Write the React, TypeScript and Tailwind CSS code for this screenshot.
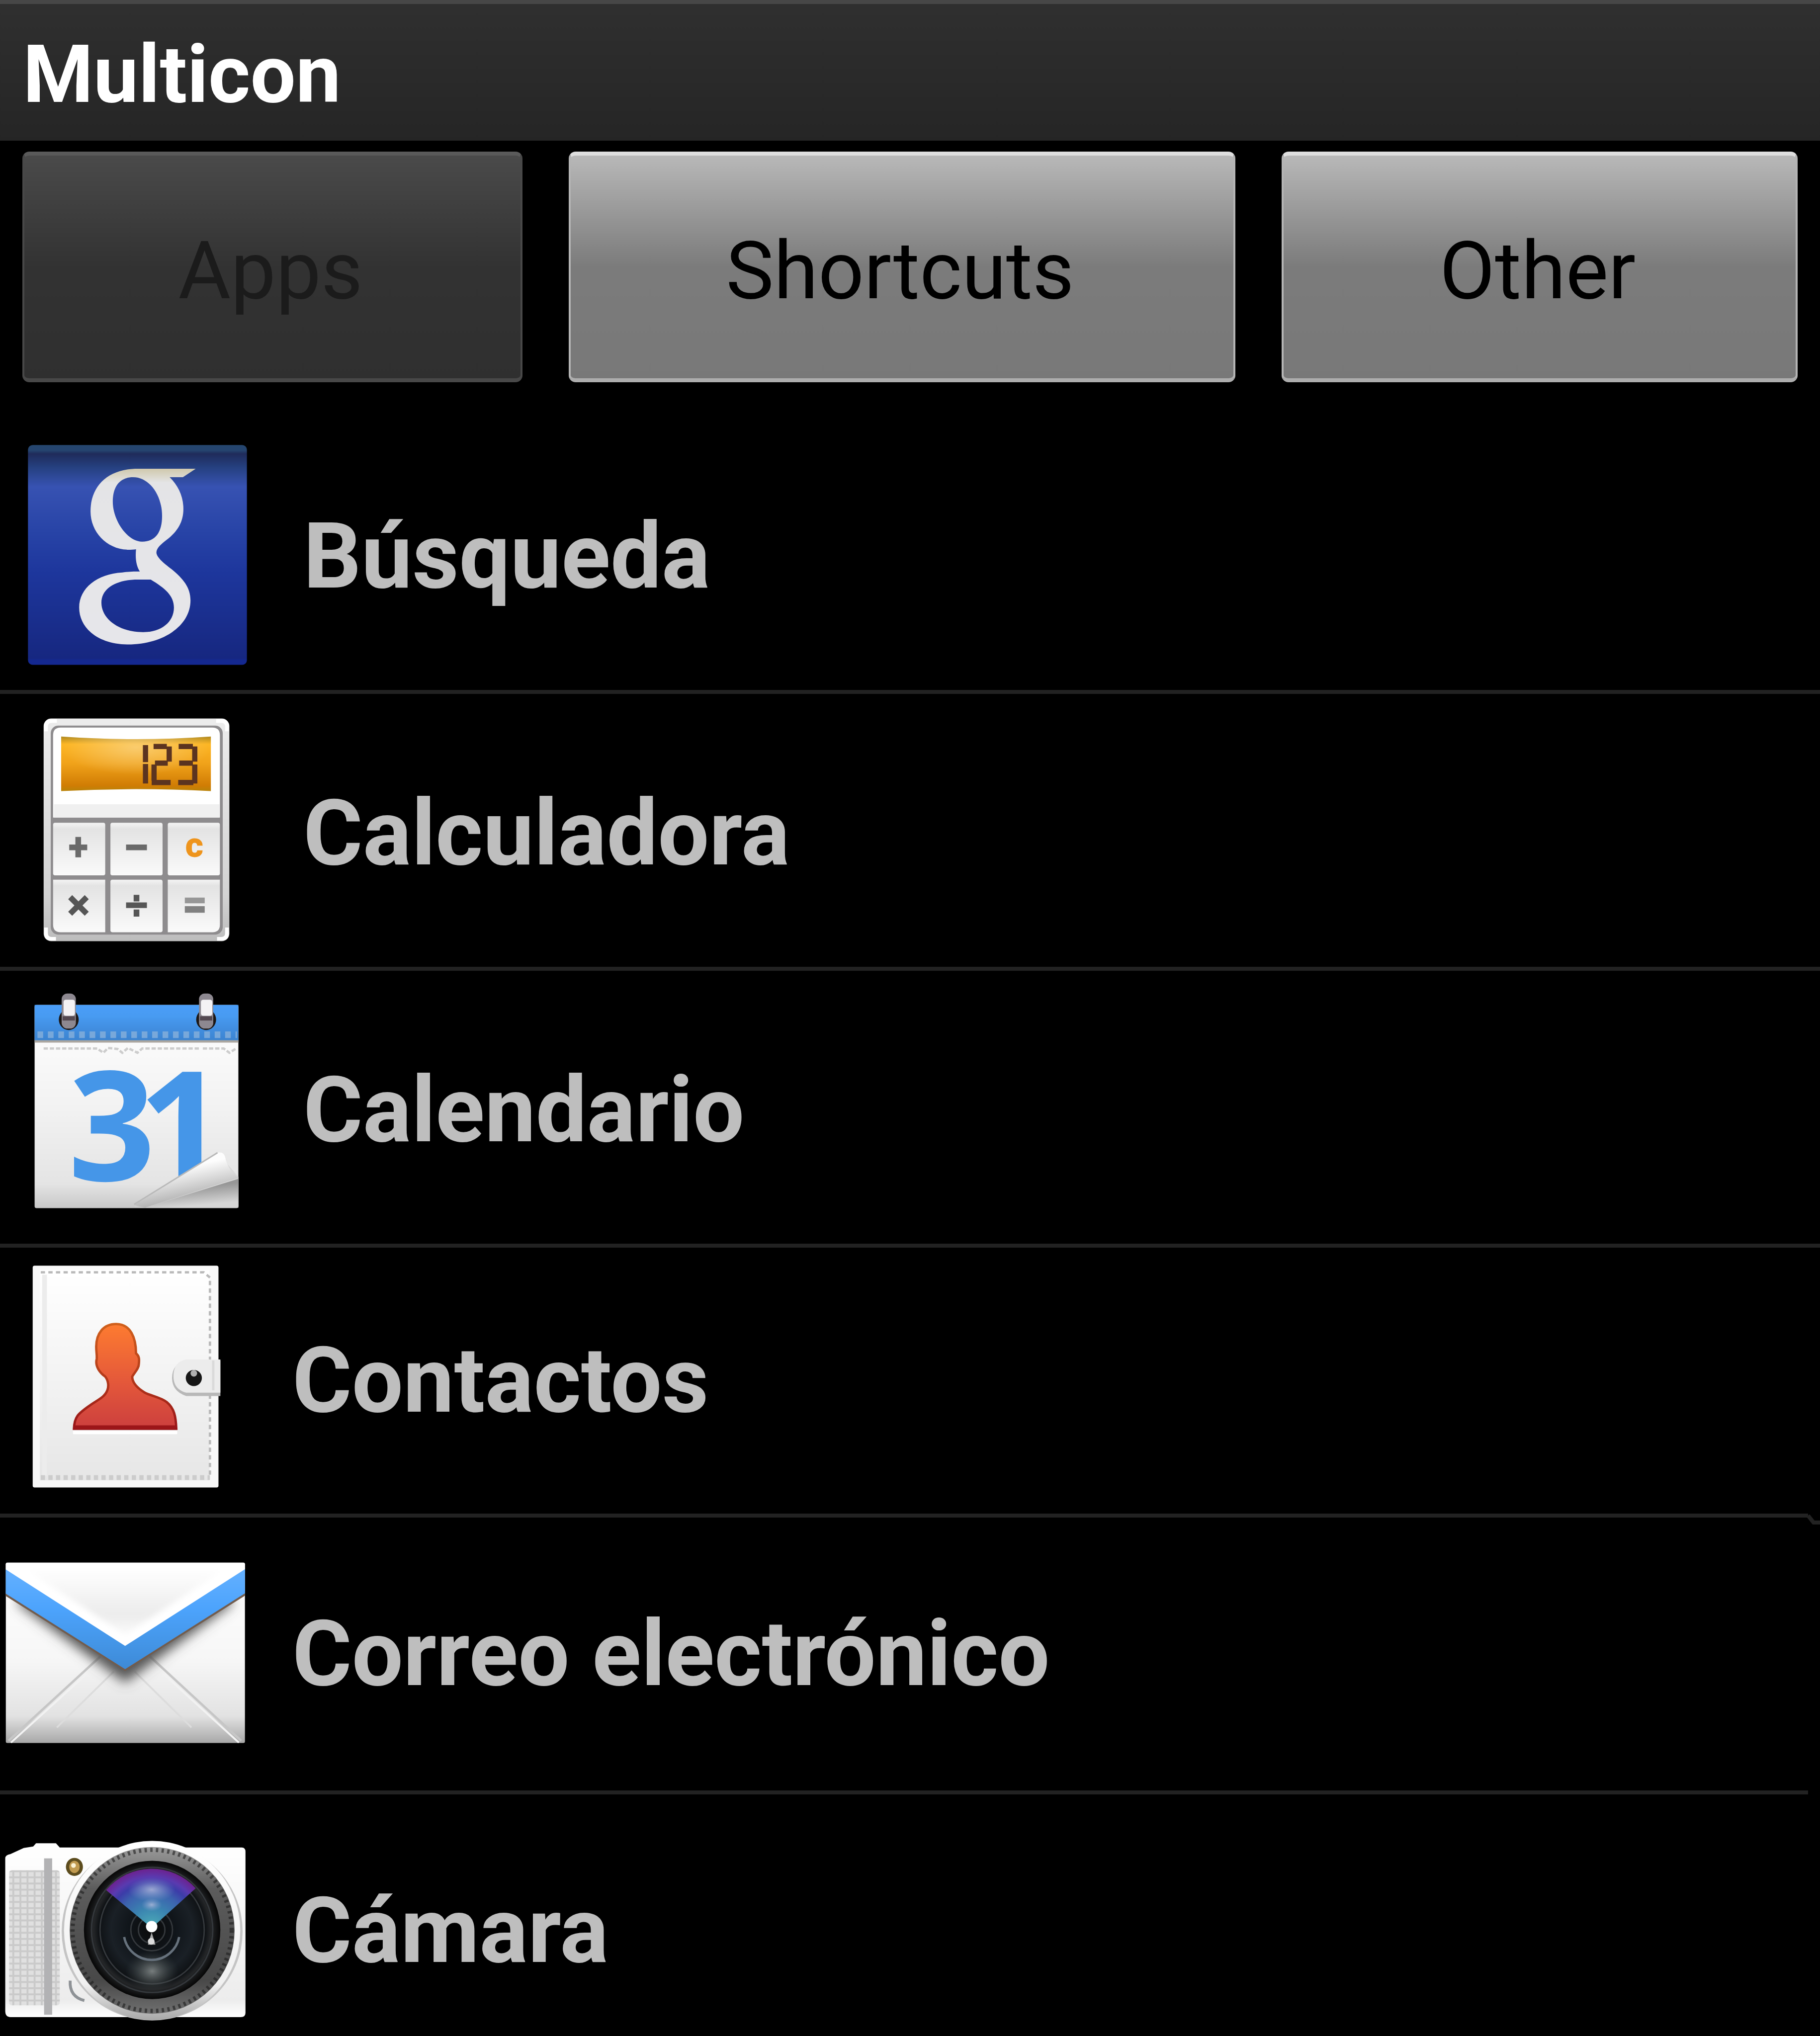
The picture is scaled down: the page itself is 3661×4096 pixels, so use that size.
import type { ReactNode } from "react"
import { useState } from "react"
import { clsx } from "clsx"

interface AppEntry {
  name: string
  icon: ReactNode
  wide?: boolean
  divider: "full" | "kinked" | "short"
}

const tabs = ["Apps", "Shortcuts", "Other"]

export default function App() {
  const [activeTab, setActiveTab] = useState("Apps")

  return (
    <div className="flex h-screen flex-col overflow-hidden bg-black font-['Roboto',sans-serif]">
      {/* Title bar */}
      <header className="flex h-[283px] shrink-0 items-center border-t-8 border-[#474747] bg-linear-to-b from-[#2f2f2f] to-[#252525] px-[46px] pt-2">
        <h1 className="text-[162px] leading-none font-bold text-white">
          Multicon
        </h1>
      </header>

      {/* Tabs */}
      <nav className="grid shrink-0 grid-cols-[1006fr_1341fr_1038fr] gap-[93px] px-[45px] pt-[22px] pb-[70px]">
        {tabs.map((tab) => (
          <TabButton
            key={tab}
            label={tab}
            active={tab === activeTab}
            onClick={() => setActiveTab(tab)}
          />
        ))}
      </nav>

      <ul className="min-h-0 flex-1 overflow-hidden">
        {apps.map((app) => (
          <AppRow key={app.name} app={app} />
        ))}
      </ul>
    </div>
  )
}

function TabButton({
  label,
  active,
  onClick,
}: {
  label: string
  active: boolean
  onClick: () => void
}) {
  return (
    <button
      disabled={active}
      onClick={onClick}
      className={clsx(
        "h-[464px] rounded-[14px] border-x-4 border-y-8 pt-4 pr-2 text-[162px] leading-none",
        active
          ? "border-x-[#484848] border-t-[#5a5a5a] border-b-[#484848] bg-linear-to-b from-[#4a4a4a] via-[#323232] via-50% to-[#2f2f2f] text-[#1b1b1b]"
          : "border-x-[#b4b4b4] border-t-[#dedede] border-b-[#adadad] bg-linear-to-b from-[#b8b8b8] via-[#7b7b7b] via-50% to-[#787878] text-black"
      )}
    >
      {label}
    </button>
  )
}

function AppRow({ app }: { app: AppEntry }) {
  return (
    <li>
      <a
        href="#"
        className={clsx("flex items-center", app.wide ? "gap-4" : "gap-[38px]")}
      >
        {app.icon}
        <span
          className={clsx(
            "text-[183px] leading-none font-bold whitespace-nowrap text-[#bebebe]",
            !app.wide && "pt-3"
          )}
        >
          {app.name}
        </span>
      </a>
      <Divider kind={app.divider} />
    </li>
  )
}

function Divider({ kind }: { kind: AppEntry["divider"] }) {
  return (
    <div className="flex h-2">
      <div className="flex-1 bg-[#222]" />
      {kind !== "full" && (
        <svg viewBox="0 0 24 24" className="size-6 overflow-visible">
          {kind === "kinked" && (
            <path d="M0 4 L11 18 H24" fill="none" stroke="#222" strokeWidth="8" />
          )}
        </svg>
      )}
    </div>
  )
}

function SearchIcon() {
  return (
    <svg viewBox="0 5 600 576" className="h-[549px] w-[572px] shrink-0">
      <defs>
        <linearGradient id="search-tile" x1="0" y1="0" x2="0" y2="1">
          <stop offset="0" stopColor="#25466e" />
          <stop offset="0.025" stopColor="#25446f" />
          <stop offset="0.04" stopColor="#1f2b5a" />
          <stop offset="0.1" stopColor="#25407f" />
          <stop offset="0.19" stopColor="#3752b2" />
          <stop offset="0.4" stopColor="#2743a6" />
          <stop offset="0.58" stopColor="#1d369c" />
          <stop offset="0.97" stopColor="#162780" />
          <stop offset="0.98" stopColor="#142890" />
          <stop offset="1" stopColor="#142890" />
        </linearGradient>
        <linearGradient id="search-g" x1="0" y1="0" x2="0" y2="1">
          <stop offset="0" stopColor="#cfc8ac" />
          <stop offset="0.08" stopColor="#e4e4e6" />
          <stop offset="1" stopColor="#e6e6ea" />
        </linearGradient>
      </defs>
      <rect x="59" y="64" width="462" height="464" rx="10" fill="url(#search-tile)" />
      <path
        fill="url(#search-g)"
        fillRule="evenodd"
        d="M291 114H413L386 132H358C376 150 387 172 387 199C387 226 375 246 352 264C340 273 330 282 330 291C330 300 343 312 362 326C386 346 402 364 402 392C402 446 344 485 270 485C208 485 167 451 167 407C167 366 205 336 258 333C272 331 285 331 295 331C288 320 285 305 287 284C282 285 276 285 272 285C226 285 191 248 191 204C191 150 228 114 291 114ZM281 132C252 132 238 152 238 184C238 222 268 268 300 268C328 268 342 248 342 214C342 168 314 132 281 132ZM318 348C348 366 367 382 367 407C367 438 340 459 302 459C250 459 214 430 214 397C214 366 246 348 291 348Z"
      />
    </svg>
  )
}

function CalculatorIcon() {
  return (
    <svg viewBox="0 5 600 576" className="h-[549px] w-[572px] shrink-0">
      <defs>
        <linearGradient id="calc-case" x1="0" y1="0" x2="0" y2="1">
          <stop offset="0" stopColor="#ececec" />
          <stop offset="0.8" stopColor="#d2d2d2" />
          <stop offset="1" stopColor="#bcbcbc" />
        </linearGradient>
        <linearGradient id="calc-key" x1="0" y1="0" x2="0" y2="1">
          <stop offset="0" stopColor="#f4f4f4" />
          <stop offset="0.12" stopColor="#e3e3e3" />
          <stop offset="1" stopColor="#fafafa" />
        </linearGradient>
        <linearGradient id="calc-lcd" x1="0" y1="0" x2="0" y2="1">
          <stop offset="0" stopColor="#b08a20" />
          <stop offset="0.14" stopColor="#fdb522" />
          <stop offset="0.5" stopColor="#f0a21a" />
          <stop offset="0.9" stopColor="#d07c04" />
          <stop offset="1" stopColor="#b98208" />
        </linearGradient>
        <radialGradient id="calc-glow" cx="0.5" cy="0.2" r="0.5">
          <stop offset="0" stopColor="#f8dca0" stopOpacity="0.6" />
          <stop offset="1" stopColor="#f8dca0" stopOpacity="0" />
        </radialGradient>
      </defs>
      <rect x="92" y="57" width="392" height="470" rx="16" fill="url(#calc-case)" />
      <g fill="none" stroke="#fff" strokeWidth="8">
        <path d="M97 84V74Q97 62 109 62H120" />
        <path d="M456 62H467Q479 62 479 74V84" />
        <path d="M97 498V510Q97 522 109 522H118" />
        <path d="M458 522H467Q479 522 479 510V498" />
      </g>
      <rect x="107" y="72" width="363" height="441" rx="16" fill="#8e8c8e" />
      <path d="M112 92Q112 76 128 76H448Q464 76 464 92V266H112Z" fill="#fff" />
      <rect x="114" y="238" width="349" height="28" fill="#f0f0f0" />
      <path d="M129 95Q287 106 445 95V210Q287 202 129 210Z" fill="url(#calc-lcd)" />
      <path d="M129 95Q287 106 445 95V210Q287 202 129 210Z" fill="url(#calc-glow)" />
      {/* Lit display segments */}
      <g stroke="#5b3420" strokeWidth="11" fill="none">
        <path d="M307 113V149M307 153V194" />
        <path d="M324 116H352M357 116V148M327 151H354M325 154V188M320 192H360" />
        <path d="M377 116H407M411 116V148M378 151H407M411 154V194M376 192H408" />
      </g>
      <g fill="url(#calc-key)">
        <rect x="112" y="277" width="110" height="111" rx="4" />
        <rect x="233" y="277" width="110" height="111" rx="4" />
        <rect x="354" y="277" width="110" height="111" rx="4" />
        <path d="M112 397H222V508H128Q112 508 112 492Z" />
        <rect x="233" y="397" width="110" height="111" rx="4" />
        <path d="M354 397H464V492Q464 508 448 508H354Z" />
      </g>
      <g stroke="#6a6a6a" strokeWidth="12">
        <path d="M146 329H184M165 307V350" />
        <path d="M266 329H310" />
        <path d="M148 434L183 469M183 434L148 469" stroke="#565656" />
        <path d="M266 451H310M288 429V443M288 460V475" stroke="#565656" />
        <path d="M390 441H432" stroke="#969696" />
        <path d="M390 460H432" strokeWidth="14" stroke="#808080" />
      </g>
      <text x="410" y="349" textAnchor="middle" fontSize="74" fontWeight="900" fill="#ee941c">
        c
      </text>
    </svg>
  )
}

function CalendarIcon() {
  return (
    <svg viewBox="0 5 600 576" className="h-[549px] w-[572px] shrink-0">
      <defs>
        <linearGradient id="cal-page" x1="0" y1="0" x2="0" y2="1">
          <stop offset="0" stopColor="#ffffff" />
          <stop offset="0.5" stopColor="#f2f2f2" />
          <stop offset="0.88" stopColor="#e4e4e4" />
          <stop offset="1" stopColor="#c8c8c8" />
        </linearGradient>
        <linearGradient id="cal-band" x1="0" y1="0" x2="0" y2="1">
          <stop offset="0" stopColor="#4a9df8" />
          <stop offset="0.3" stopColor="#489bf2" />
          <stop offset="1" stopColor="#3b83d0" />
        </linearGradient>
        <linearGradient id="cal-curl" x1="0.4" y1="0.3" x2="0.6" y2="0.8">
          <stop offset="0" stopColor="#fdfdfd" />
          <stop offset="1" stopColor="#b4b4b4" />
        </linearGradient>
        <linearGradient id="cal-under" x1="0" y1="0" x2="0.3" y2="1">
          <stop offset="0.4" stopColor="#969696" />
          <stop offset="1" stopColor="#d6d6d6" />
        </linearGradient>
      </defs>
      <rect x="73" y="77" width="430" height="429" rx="4" fill="url(#cal-page)" />
      <rect x="73" y="77" width="430" height="75" fill="url(#cal-band)" />
      <path d="M79 140H500" stroke="#78a8da" strokeWidth="14" strokeDasharray="12 10" />
      <path d="M73 154H503" stroke="#aaa6a0" strokeWidth="5" />
      <path
        d="M92 169H205L218 178L228 168L248 170L258 178L270 168L290 178L300 169H420M428 169H472L484 178L500 168"
        fill="none"
        stroke="#cdcdcd"
        strokeWidth="5"
        strokeDasharray="9 4"
      />
      {[145, 435].map((x) => (
        <g key={x}>
          <ellipse cx={x} cy="108" rx="21" ry="22" fill="#1c1715" />
          <rect x={x - 15} y="53" width="30" height="74" rx="12" fill="#8d8890" />
          <rect x={x - 11} y="66" width="24" height="34" rx="5" fill="#f4f2f4" />
          <rect x={x - 13} y="101" width="26" height="9" fill="#544850" />
        </g>
      ))}
      <text
        x="144 292"
        y="448"
        fontFamily="'Open Sans', sans-serif"
        fontSize="322"
        fontWeight="700"
        fill="#4596e8"
      >
        31
      </text>
      <path d="M283 502L459 389L503 440V502Z" fill="#d8d8d8" />
      <path d="M306 505L503 444V505Z" fill="url(#cal-under)" />
      <path d="M283 500L459 389Q472 386 475 398Q480 424 503 442L306 505Z" fill="url(#cal-curl)" />
      <path d="M283 498L459 389" stroke="#b8b8b8" strokeWidth="3" />
    </svg>
  )
}

function ContactsIcon() {
  return (
    <svg viewBox="0 5 600 561" className="h-[535px] w-[572px] shrink-0">
      <defs>
        <linearGradient id="contact-cover" x1="0" y1="0" x2="0" y2="1">
          <stop offset="0" stopColor="#ffffff" />
          <stop offset="0.5" stopColor="#f3f3f3" />
          <stop offset="1" stopColor="#e6e6e6" />
        </linearGradient>
        <linearGradient id="contact-person" x1="0" y1="0" x2="0" y2="1">
          <stop offset="0" stopColor="#fd7b30" />
          <stop offset="0.55" stopColor="#e4583a" />
          <stop offset="1" stopColor="#cc3f3e" />
        </linearGradient>
        <linearGradient id="contact-edge" x1="0" y1="0" x2="0" y2="1">
          <stop offset="0" stopColor="#d0601c" />
          <stop offset="1" stopColor="#981418" />
        </linearGradient>
      </defs>
      <rect x="69" y="43" width="392" height="468" rx="4" fill="#f8f8f8" />
      <rect x="84" y="52" width="358" height="444" fill="url(#contact-cover)" />
      <path d="M94 62V486" stroke="#ececec" strokeWidth="10" />
      <g fill="none" stroke="#bababa" strokeWidth="5" strokeDasharray="9 7">
        <path d="M86 57H430L443 68V486" />
        <path d="M86 490H443" strokeWidth="10" stroke="#cccccc" />
      </g>
      <path
        d="M245 166C218 166 203 186 203 214C203 226 205 232 204 240C200 256 212 270 222 277C229 286 230 298 226 307C220 322 202 328 188 339C164 356 157 362 156 387H372C371 362 368 344 352 331C338 320 318 318 304 310C290 301 279 290 279 277C284 268 293 260 293 250C294 240 294 234 287 228C287 196 276 166 245 166Z"
        fill="url(#contact-person)"
        stroke="url(#contact-edge)"
        strokeWidth="5"
      />
      <path d="M158 384H370" stroke="#9c1519" strokeWidth="8" />
      <path d="M154 395H374" stroke="#ffffff" strokeWidth="7" />
      <path d="M393 243H465V318H393Q363 308 363 280Q363 250 393 243Z" fill="#b8b8b8" />
      <path d="M393 241H465V311H393Q366 304 366 276Q366 246 393 241Z" fill="#ececec" />
      <path d="M450 243V306" stroke="#dadada" strokeWidth="5" />
      <circle cx="409" cy="280" r="17" fill="#161616" />
      <circle cx="409" cy="270" r="7" fill="#b0b0b0" />
    </svg>
  )
}

function MailIcon() {
  return (
    <svg viewBox="0 5 600 576" className="h-[549px] w-[572px] shrink-0">
      <defs>
        <linearGradient id="mail-body" x1="0" y1="0" x2="0" y2="1">
          <stop offset="0" stopColor="#ffffff" />
          <stop offset="0.55" stopColor="#f6f6f6" />
          <stop offset="0.85" stopColor="#e2e2e2" />
          <stop offset="1" stopColor="#a8a8a8" />
        </linearGradient>
        <linearGradient id="mail-flap" x1="0" y1="0" x2="0" y2="1">
          <stop offset="0" stopColor="#ffffff" />
          <stop offset="0.7" stopColor="#ececec" />
          <stop offset="1" stopColor="#fafafa" />
        </linearGradient>
        <linearGradient id="mail-stripe" x1="0" y1="0" x2="0" y2="1">
          <stop offset="0" stopColor="#63b0ff" />
          <stop offset="0.4" stopColor="#4ca3fc" />
          <stop offset="1" stopColor="#3d8ad6" />
        </linearGradient>
        <filter id="mail-blur" x="-20%" y="-20%" width="140%" height="140%">
          <feGaussianBlur stdDeviation="13" />
        </filter>
        <filter id="flap-blur">
          <feGaussianBlur stdDeviation="6" />
        </filter>
        <clipPath id="mail-clip">
          <rect x="12" y="100" width="505" height="381" rx="4" />
        </clipPath>
      </defs>
      <g clipPath="url(#mail-clip)">
        <rect x="12" y="100" width="505" height="381" fill="url(#mail-body)" />
        <path d="M120 448L240 330M404 448L284 330" stroke="#dcdcdc" strokeWidth="4" />
        <path d="M18 476L212 298M509 476L316 298" stroke="#c6c6c6" strokeWidth="5" />
        <path d="M23 480L217 304M504 480L311 304" stroke="#f2f2f2" strokeWidth="4" />
        <path
          d="M40 180L264 345L488 180L264 240Z"
          fill="#555"
          stroke="#555"
          strokeWidth="14"
          filter="url(#mail-blur)"
        />
        <path d="M8 168L264 329L520 168V160H8Z" fill="#735c4c" />
        <path d="M8 114V163L264 325L520 163V114Z" fill="url(#mail-stripe)" />
        <path d="M8 100V112L264 276L520 112V100Z" fill="#ffffff" />
        <path d="M48 110L264 252L480 110Z" fill="url(#mail-flap)" filter="url(#flap-blur)" />
      </g>
    </svg>
  )
}

function CameraIcon() {
  return (
    <svg viewBox="0 5 600 576" className="h-[549px] w-[572px] shrink-0">
      <defs>
        <linearGradient id="cam-body" x1="0" y1="0" x2="0" y2="1">
          <stop offset="0" stopColor="#ffffff" />
          <stop offset="0.9" stopColor="#ececec" />
          <stop offset="1" stopColor="#ffffff" />
        </linearGradient>
        <linearGradient id="cam-rim" x1="0" y1="0" x2="0" y2="1">
          <stop offset="0" stopColor="#ffffff" />
          <stop offset="0.8" stopColor="#f0f0f0" />
          <stop offset="1" stopColor="#a8a8a8" />
        </linearGradient>
        <linearGradient id="cam-ring" x1="0" y1="0" x2="0" y2="1">
          <stop offset="0" stopColor="#9a9a9a" />
          <stop offset="0.25" stopColor="#5c5c5c" />
          <stop offset="0.8" stopColor="#484848" />
          <stop offset="1" stopColor="#707070" />
        </linearGradient>
        <radialGradient id="cam-glass">
          <stop offset="0" stopColor="#0b0b0b" />
          <stop offset="0.35" stopColor="#10151a" />
          <stop offset="0.6" stopColor="#1a2026" />
          <stop offset="0.78" stopColor="#0e1114" />
          <stop offset="0.86" stopColor="#242628" />
          <stop offset="1" stopColor="#060606" />
        </radialGradient>
        <radialGradient id="cam-flare" gradientUnits="userSpaceOnUse" cx="320" cy="287" r="125">
          <stop offset="0" stopColor="#4fb0b8" />
          <stop offset="0.35" stopColor="#3a83b0" />
          <stop offset="0.6" stopColor="#3c62ae" />
          <stop offset="0.76" stopColor="#3c3ca8" />
          <stop offset="0.86" stopColor="#5a3ab0" />
          <stop offset="1" stopColor="#6c2290" />
        </radialGradient>
        <radialGradient id="cam-sheen">
          <stop offset="0" stopColor="#b4bcdc" stopOpacity="0.8" />
          <stop offset="1" stopColor="#8a9cd0" stopOpacity="0" />
        </radialGradient>
        <radialGradient id="cam-glow">
          <stop offset="0" stopColor="#7c8282" stopOpacity="0.95" />
          <stop offset="1" stopColor="#3c4444" stopOpacity="0" />
        </radialGradient>
        <pattern id="cam-grip" width="15" height="13" patternUnits="userSpaceOnUse">
          <rect width="15" height="13" fill="#cacaca" />
          <rect width="11" height="9" fill="#e0e0e0" />
        </pattern>
      </defs>
      <path
        d="M11 140Q11 133 22 131L50 118L70 115L76 108H118L126 117H510Q518 117 518 126V466Q518 475 508 475H22Q11 475 11 462Z"
        fill="url(#cam-body)"
      />
      <rect x="19" y="165" width="107" height="285" rx="6" fill="url(#cam-grip)" />
      <rect x="93" y="140" width="17" height="330" fill="#b2b2b4" />
      <ellipse cx="157" cy="158" rx="18" ry="19" fill="#5c4c1e" />
      <ellipse cx="157" cy="158" rx="11" ry="13" fill="#c09a50" />
      <circle cx="155" cy="155" r="5" fill="#fbf2d4" />
      <path d="M148 398Q146 432 178 440" fill="none" stroke="#8e9296" strokeWidth="6" />
      <ellipse cx="321" cy="294" rx="191" ry="188" fill="#c4c4c4" />
      <ellipse cx="321" cy="292" rx="186" ry="189" fill="url(#cam-rim)" />
      <ellipse cx="321" cy="292" rx="174" ry="176" fill="url(#cam-ring)" />
      <ellipse
        cx="321"
        cy="292"
        rx="168"
        ry="170"
        fill="none"
        stroke="#1c1c1c"
        strokeWidth="9"
        strokeDasharray="5 7"
        opacity="0.6"
      />
      <ellipse cx="321" cy="291" rx="144" ry="146" fill="url(#cam-glass)" />
      <g fill="none" stroke="#34383c" strokeWidth="3">
        <ellipse cx="321" cy="291" rx="128" ry="132" />
        <ellipse cx="321" cy="291" rx="110" ry="114" />
        <circle cx="320" cy="291" r="44" />
        <circle cx="320" cy="291" r="28" />
      </g>
      <ellipse cx="321" cy="378" rx="56" ry="44" fill="url(#cam-glow)" />
      <path d="M262 306A59 59 0 0 0 378 306" fill="none" stroke="#66717c" strokeWidth="5" />
      <path d="M320 287L224 207A125 125 0 0 1 413 203Z" fill="url(#cam-flare)" />
      <ellipse cx="320" cy="206" rx="50" ry="26" fill="url(#cam-sheen)" />
      <ellipse cx="320" cy="238" rx="22" ry="14" fill="url(#cam-sheen)" />
      <path d="M320 296L328 322H312Z" fill="#a8a8a8" />
      <circle cx="320" cy="284" r="12" fill="#ffffff" />
      <circle cx="319" cy="315" r="7" fill="#dcdcdc" />
    </svg>
  )
}

const apps: AppEntry[] = [
  { name: "Búsqueda", icon: <SearchIcon />, divider: "full" },
  { name: "Calculadora", icon: <CalculatorIcon />, divider: "full" },
  { name: "Calendario", icon: <CalendarIcon />, divider: "full" },
  { name: "Contactos", icon: <ContactsIcon />, wide: true, divider: "kinked" },
  { name: "Correo electrónico", icon: <MailIcon />, wide: true, divider: "short" },
  { name: "Cámara", icon: <CameraIcon />, wide: true, divider: "short" },
]
